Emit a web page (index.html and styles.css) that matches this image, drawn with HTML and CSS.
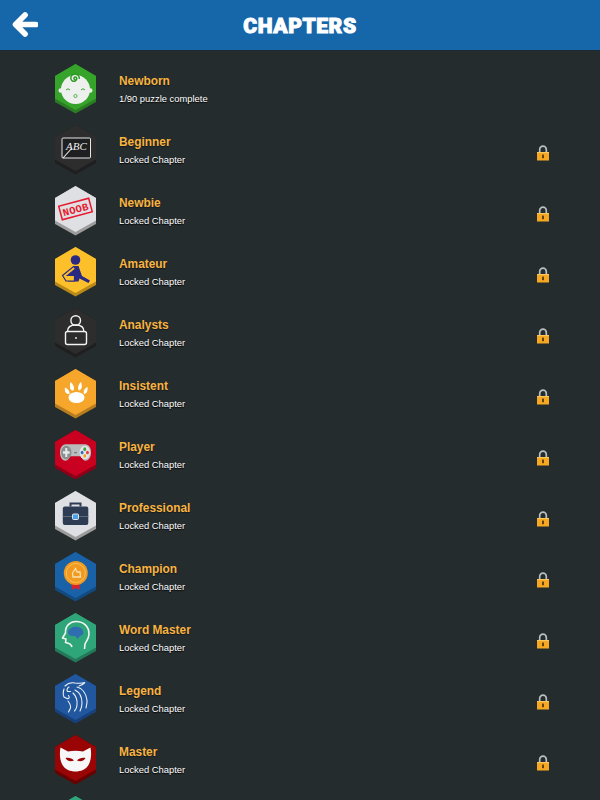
FILE: index.html
```html
<!DOCTYPE html>
<html lang="en">
<head>
<meta charset="utf-8">
<title>Chapters</title>
<link rel="stylesheet" href="styles.css">
</head>
<body>
<svg class="defs" width="0" height="0" aria-hidden="true">
  <defs>
    <symbol id="lock" viewBox="0 0 14 16">
      <path d="M3.700 8V4.500a3.300 3.300 0 0 1 6.600 0V8" fill="none" stroke="#b9bec0" stroke-width="1.700"/>
      <rect x="1" y="7" width="12" height="8.500" fill="#f7a823"/>
      <rect x="1" y="7" width="12" height="1" fill="#fcc75c"/>
      <rect x="6.200" y="9.600" width="1.600" height="3.600" fill="#3f2a06"/>
    </symbol>
    <symbol id="side" viewBox="0 0 41 50"><path d="M20.500 0 41 12v26L20.500 49.500 0 38V12z"/></symbol>
    <symbol id="face" viewBox="0 0 41 50"><path d="M20.500 0 41 12v22.500L20.500 46 0 34.500V12z"/></symbol>
  </defs>
</svg>
<header class="topbar">
  <svg class="back" viewBox="0 0 24 24" aria-hidden="true"><path d="M22 12H5M12.500 3.500 4 12l8.500 8.500" fill="none" stroke="#fff" stroke-width="5" stroke-linecap="round" stroke-linejoin="round"/></svg>
  <h1 class="title">CHAPTERS</h1>
</header>
<main class="list">

  <div class="row">
    <svg class="badge" viewBox="0 0 41 50"><use href="#side" class="s green"/><use href="#face" class="f green"/>
      <circle cx="20.500" cy="25.500" r="14.500" fill="#eef0ee"/><circle cx="5.800" cy="26.500" r="2.300" fill="#eef0ee"/><circle cx="35.200" cy="26.500" r="2.300" fill="#eef0ee"/>
      <path d="M20.500 15.800c-1.300 0-1.900-1-1.500-2s2-1.100 2.500-.1c.5 1 0 2.500-1.500 3.300-2 .8-4-.5-4.200-2.800-.2-2.500 2-4.300 4.500-4.100 2.600.2 4.300 2.300 4 4.800" fill="none" stroke="#2f9a25" stroke-width="1.500"/>
      <path d="M11 26q2-2.500 4 0M26 26q2-2.500 4 0" fill="none" stroke="#36a42b" stroke-width="1"/><circle cx="20.500" cy="32" r="1.600" fill="none" stroke="#36a42b" stroke-width=".8"/></svg>
    <div class="text"><div class="name">Newborn</div><div class="sub">1/90 puzzle complete</div></div>
  </div>

  <div class="row">
    <svg class="badge" viewBox="0 0 41 50"><use href="#side" class="s char"/><use href="#face" class="f char"/>
      <rect x="7" y="13" width="28.500" height="20" rx="1" fill="#1d1f20" stroke="#e6e6e6" stroke-width="1"/><text x="11" y="25" class="chalk">ABC</text><path d="M8 33 17 23" stroke="#eee" stroke-width="1.100"/></svg>
    <div class="text"><div class="name">Beginner</div><div class="sub">Locked Chapter</div></div>
    <svg class="lock"><use href="#lock"/></svg>
  </div>

  <div class="row">
    <svg class="badge" viewBox="0 0 41 50"><use href="#side" class="s silver"/><use href="#face" class="f silver"/>
      <g transform="rotate(-15 20.500 23)"><rect x="5" y="16" width="31" height="14" fill="none" stroke="#e8182e" stroke-width="1.500"/><text x="20.500" y="27" class="noob">NOOB</text></g></svg>
    <div class="text"><div class="name">Newbie</div><div class="sub">Locked Chapter</div></div>
    <svg class="lock"><use href="#lock"/></svg>
  </div>

  <div class="row">
    <svg class="badge" viewBox="0 0 41 50"><use href="#side" class="s yellow"/><use href="#face" class="f yellow"/>
      <circle cx="20.500" cy="13" r="4.800" fill="#2b2a82"/><path d="M18.500 19h5l3.500 10 8 4.500-1.500 2.500-9-4.500-1 3H13l-1-5z" fill="#2b2a82"/><path d="M7.500 28.500 18.500 19.500l2 2.500-8 6.500h7v5.500H11z" fill="#fdc02a" stroke="#2b2a82" stroke-width="1.200"/></svg>
    <div class="text"><div class="name">Amateur</div><div class="sub">Locked Chapter</div></div>
    <svg class="lock"><use href="#lock"/></svg>
  </div>

  <div class="row">
    <svg class="badge" viewBox="0 0 41 50"><use href="#side" class="s char"/><use href="#face" class="f char"/>
      <g fill="none" stroke="#f4f4f4" stroke-width="1.400"><circle cx="20.700" cy="12.500" r="4.800"/><path d="M12.500 23.500q0-6.500 8.200-6.500t8.200 6.500"/><rect x="10.500" y="23.500" width="21" height="13" rx="2"/></g><circle cx="21" cy="30" r=".9" fill="#f4f4f4"/></svg>
    <div class="text"><div class="name">Analysts</div><div class="sub">Locked Chapter</div></div>
    <svg class="lock"><use href="#lock"/></svg>
  </div>

  <div class="row">
    <svg class="badge" viewBox="0 0 41 50"><use href="#side" class="s amber"/><use href="#face" class="f amber"/>
      <g fill="#fff"><ellipse cx="21.500" cy="28.500" rx="8" ry="5.500"/><path d="M14.500 25c-3 .5-5.500-2-4.500-6.500 2.500 1 5 3.500 4.500 6.500z"/><path d="M18.500 21.500c-3 .5-4.500-3-3-8.500 2.500 2 4.500 5.500 3 8.500z"/><path d="M24 21.500c-2-2.500-.500-6.500 2-8.500 1.500 4 1 7.500-2 8.500z"/><path d="M29 25c-1-3 .5-5.500 3.500-7 .5 3.500-.5 6.500-3.500 7z"/></g></svg>
    <div class="text"><div class="name">Insistent</div><div class="sub">Locked Chapter</div></div>
    <svg class="lock"><use href="#lock"/></svg>
  </div>

  <div class="row">
    <svg class="badge" viewBox="0 0 41 50"><use href="#side" class="s red"/><use href="#face" class="f red"/>
      <g transform="translate(3.300 -2.250) scale(.84 1.100)"><path d="M9 15h23c4.500 0 7 3.500 7 7.500s-2.500 7.500-6.500 7.500c-3 0-4.500-2.500-6-4H14.500c-1.500 1.500-3 4-6 4-4 0-6.500-3.500-6.500-7.500S4.500 15 9 15z" fill="#b8bcbc"/>
      <circle cx="9.500" cy="22.500" r="6.200" fill="#8a9090"/><path d="M9.500 18.500v8M5.500 22.500h8" stroke="#e8e8e8" stroke-width="2.400"/>
      <circle cx="31.500" cy="22.500" r="6.200" fill="#e6e6e6"/><circle cx="31.500" cy="19.500" r="1.700" fill="#3aa33a"/><circle cx="34.700" cy="22.500" r="1.700" fill="#e83a3a"/><circle cx="28.300" cy="22.500" r="1.700" fill="#2f6fc0"/><circle cx="31.500" cy="25.500" r="1.700" fill="#eea52a"/><rect x="19" y="22" width="3" height="1.200" fill="#6e7272"/></g></svg>
    <div class="text"><div class="name">Player</div><div class="sub">Locked Chapter</div></div>
    <svg class="lock"><use href="#lock"/></svg>
  </div>

  <div class="row">
    <svg class="badge" viewBox="0 0 41 50"><use href="#side" class="s silver"/><use href="#face" class="f silver"/>
      <path d="M15.500 15.500v-3h10v3" fill="none" stroke="#2d3c52" stroke-width="2"/><rect x="7.800" y="15.500" width="25.500" height="18.500" rx="2" fill="#2d3c52"/><path d="M7.800 25.500h25.500" stroke="#5d6a7d" stroke-width="1"/><rect x="17.500" y="23" width="6" height="5.500" rx="1" fill="#4aa3e8" stroke="#e0e4e8" stroke-width="1"/></svg>
    <div class="text"><div class="name">Professional</div><div class="sub">Locked Chapter</div></div>
    <svg class="lock"><use href="#lock"/></svg>
  </div>

  <div class="row">
    <svg class="badge" viewBox="0 0 41 50"><use href="#side" class="s blue"/><use href="#face" class="f blue"/>
      <path d="M16.500 31h8.500l-.5 7-3.800-2-3.800 2z" fill="#d8232e"/><circle cx="20.800" cy="21" r="12" fill="#f09a1f"/><circle cx="20.800" cy="21" r="9.500" fill="none" stroke="#f9bf5c" stroke-width="1"/><path d="M17.500 21l3-4.500 1.500 3.500h3l.5 5h-7.500z" fill="none" stroke="#fde0b0" stroke-width="1.300"/></svg>
    <div class="text"><div class="name">Champion</div><div class="sub">Locked Chapter</div></div>
    <svg class="lock"><use href="#lock"/></svg>
  </div>

  <div class="row">
    <svg class="badge" viewBox="0 0 41 50"><use href="#side" class="s teal"/><use href="#face" class="f teal"/>
      <path d="M17 34c-1-2-1-3-3-3.500l-3.500-1 .5-3.500-3.500-1 3-5C10 13 15 8.500 21 8.500c7.500 0 13 5 13 12.500 0 5-3 7.500-4 10l-.5 5" fill="none" stroke="#f2f5f2" stroke-width="1.600" stroke-linejoin="round"/>
      <path d="M13 19c1-4 6-6 10-5s6 4 5 7c-1 2-3 1-4 3l-1 2-3-3c-3 0-7 0-7-4z" fill="#2f6db0"/></svg>
    <div class="text"><div class="name">Word Master</div><div class="sub">Locked Chapter</div></div>
    <svg class="lock"><use href="#lock"/></svg>
  </div>

  <div class="row">
    <svg class="badge" viewBox="0 0 41 50"><use href="#side" class="s navy"/><use href="#face" class="f navy"/>
      <g fill="none" stroke="#eef1f6" stroke-width="1.100" stroke-linecap="round"><path d="M10 12c3-3 7-3.500 10-3 4 .5 7 .5 10-.5-2 2-4 3-6 3.500"/><path d="M9 15c-1 3-1.500 5 0 8l3 1.500c2 .5 3-1 1.500-3"/><path d="M14 13c-2 1-2.500 3-1.500 4.500h3"/><path d="M22 13c5 1 9 6 10 13 .3 3-.5 6-1 8"/><path d="M20 16c4 2 7 7 7 13 0 4-1 6-2 8"/><path d="M18 19c3 3 4.500 7 4 12 0 3-1.500 5-2.500 6"/><path d="M13 27c1.500 2 3 4 2.500 7l-2 4"/></g></svg>
    <div class="text"><div class="name">Legend</div><div class="sub">Locked Chapter</div></div>
    <svg class="lock"><use href="#lock"/></svg>
  </div>

  <div class="row">
    <svg class="badge" viewBox="0 0 41 50"><use href="#side" class="s crimson"/><use href="#face" class="f crimson"/>
      <path d="M5.500 12.500c2.500 1 5 3 7.500 4 5-1 10-1 15 0 2.500-1 5-3 7.500-4 1 5 1 12.500-2 17.500-2.500 4.500-8 6.500-13 6.500s-10.500-2-13-6.500c-3-5-3-12.500-2-17.500z" fill="#f7f7f7"/>
      <path d="M10.500 23c3-.8 6.500.2 8.500 2.500-3 1.500-6.500 1-8.500-2.500zM30.500 23c-3-.8-6.500.200-8.500 2.500 3 1.500 6.500 1 8.500-2.500z" fill="#990404"/></svg>
    <div class="text"><div class="name">Master</div><div class="sub">Locked Chapter</div></div>
    <svg class="lock"><use href="#lock"/></svg>
  </div>

  <div class="row">
    <svg class="badge" viewBox="0 0 41 50"><use href="#side" class="s teal"/><use href="#face" class="f teal"/></svg>
  </div>

</main>
</body>
</html>
```

FILE: styles.css
```css
html, body {
  margin: 0;
  height: 800px;
  overflow: hidden;
  background: #252c2e;
}
.defs { position: absolute; }
.topbar {
  height: 50px;
  background: #1666aa;
  box-shadow: 0 1px 0 #1b2a35;
  display: flex;
  align-items: center;
  justify-content: center;
  position: relative;
}
.back {
  position: absolute;
  left: 11px;
  top: 11px;
  width: 27px;
  height: 27px;
}
.title {
  margin: 2px 0 0;
  font: 900 21px/1 Roboto, "Liberation Sans", sans-serif;
  color: #fff;
  letter-spacing: .6px;
  -webkit-text-stroke: 1px #fff;
}
.list {
  height: 750px;
  box-sizing: border-box;
  overflow: hidden;
  padding-top: 8px;
}
.row {
  height: 61px;
  display: flex;
  align-items: center;
  padding-left: 55px;
  padding-right: 50px;
}
.badge {
  width: 41px;
  height: 50px;
  flex: none;
}
.text {
  margin-left: 23px;
  padding-top: 2px;
  flex: 1;
  font-family: "Liberation Sans", Arial, sans-serif;
}
.name {
  font-size: 11.900px;
  line-height: 15px;
  padding-bottom: 2px;
  font-weight: 700;
  color: #f9b33f;
  text-shadow: 0 1px 1px #111820;
}
.sub {
  font-size: 9.400px;
  line-height: 15px;
  color: #fff;
  text-shadow: 0 1px 1px #000;
}
.lock {
  width: 14px;
  height: 16px;
  flex: none;
  margin-top: 6px;
}
.f.green { fill: #36a42b; } .s.green { fill: #2a7d22; }
.f.char { fill: #2d2d2d; } .s.char { fill: #1f1f1f; }
.f.silver { fill: #dfe0e3; } .s.silver { fill: #9c9c9c; }
.f.yellow { fill: #fdc02a; } .s.yellow { fill: #b98a1a; }
.f.amber { fill: #f5a62b; } .s.amber { fill: #b67d20; }
.f.red { fill: #c9001f; } .s.red { fill: #8f0018; }
.f.blue { fill: #1a62a8; } .s.blue { fill: #124b82; }
.f.teal { fill: #2fa57a; } .s.teal { fill: #23795a; }
.f.navy { fill: #20579f; } .s.navy { fill: #18407a; }
.f.crimson { fill: #990404; } .s.crimson { fill: #660202; }
.chalk {
  font: italic 11px "Liberation Serif", serif;
  fill: #eee;
}
.noob {
  font: 700 10.500px "Liberation Mono", monospace;
  fill: #e8182e;
  text-anchor: middle;
  letter-spacing: .3px;
}
```
